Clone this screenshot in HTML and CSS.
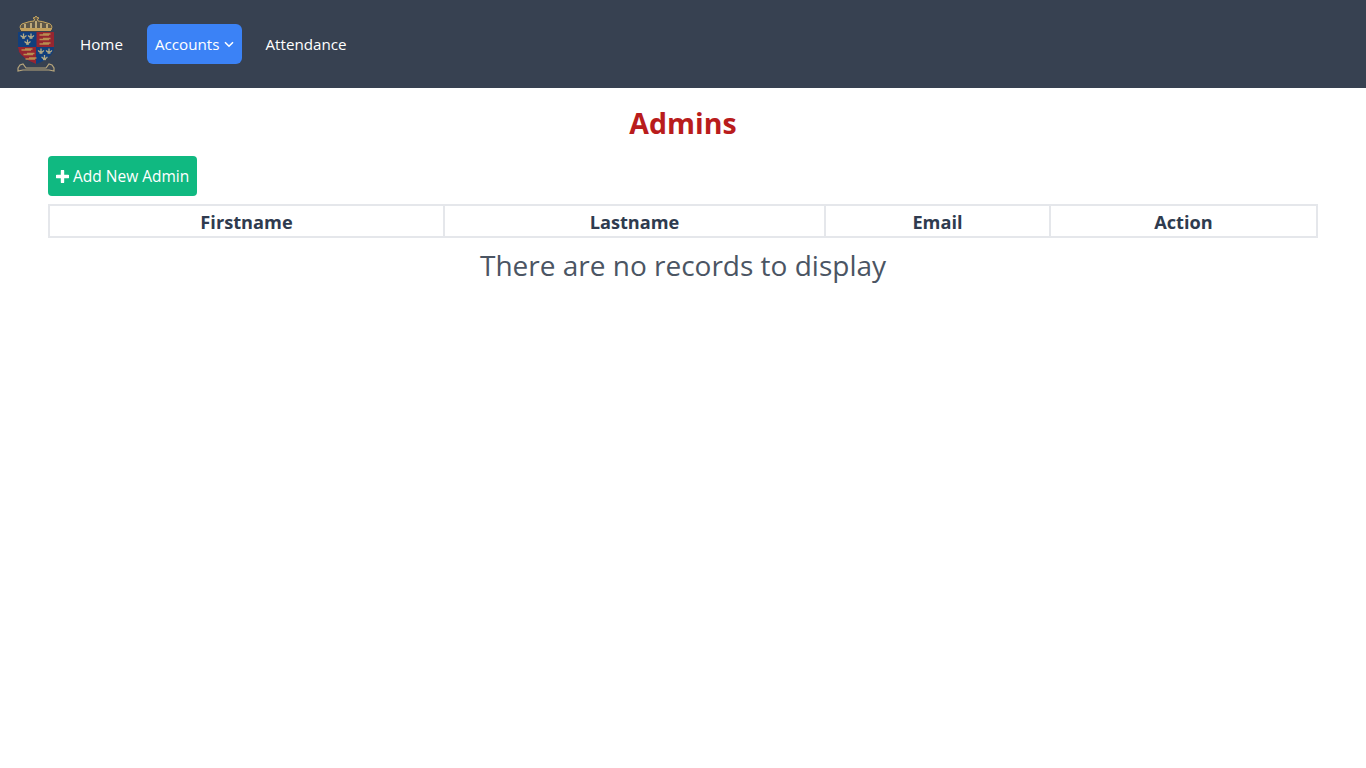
FILE: index.html
```html
<!DOCTYPE html>
<html lang="en">
<head>
    <meta charset="UTF-8">
    <meta name="viewport" content="width=device-width, initial-scale=1.0">
    <title>Admins</title>
    <link rel="stylesheet" href="styles.css">
</head>
<body>
    <nav class="navbar">
        <svg class="logo" width="40" height="58" viewBox="0 0 40 58" aria-hidden="true">
            <defs>
                <g id="fleur" fill="none" stroke="#b5ab85" stroke-width="1.300">
                    <path d="M0 -2.500 V2.500 M-2.600 -0.800 Q-2.600 1 0 1 Q2.600 1 2.600 -0.800"/>
                    <path d="M-1.500 2 H1.500"/>
                </g>
                <g id="lion" fill="none" stroke="#b98f50" stroke-width="1.300">
                    <path d="M-5.500 0 H4 M-2 -1 H5.500"/>
                </g>
            </defs>
            <!-- crown -->
            <path d="M5 15 Q2 9 9 8 Q14 6 18 6 L18.500 4 L17 3 L19 2.500 L20 1 L21 2.500 L23 3 L21.500 4 L22 6 Q26 6 31 8 Q38 9 35 15 Z" fill="#5d5648" stroke="#c9a860" stroke-width="1"/>
            <path d="M9 9 V14 M15 8 V14 M20 6 V14 M25 8 V14 M31 9 V14" stroke="#dcc48a" stroke-width="1.500"/>
            <rect x="5" y="13" width="30" height="3" fill="#c2a05c"/>
            <!-- shield -->
            <path d="M2 17 H38 V33 Q37 43 20 49 Q3 43 2 33 Z" fill="#123f7c"/>
            <path d="M20.500 17 H38 V32 H20.500 Z" fill="#962630"/>
            <path d="M2 32 H20 V49 Q7 44 3 37 Z" fill="#962630"/>
            <use href="#lion" x="29" y="20"/>
            <use href="#lion" x="29" y="24.500"/>
            <use href="#lion" x="29" y="29"/>
            <use href="#lion" x="11" y="35"/>
            <use href="#lion" x="13" y="39.500"/>
            <use href="#lion" x="15" y="44"/>
            <use href="#fleur" x="7.500" y="21"/>
            <use href="#fleur" x="15" y="21"/>
            <use href="#fleur" x="11.500" y="27"/>
            <use href="#fleur" x="25" y="36"/>
            <use href="#fleur" x="33" y="36"/>
            <use href="#fleur" x="28.500" y="42.500"/>
            <!-- motto -->
            <path d="M2 53 L4 50 L7 49 L10 53 H30 L33 49 L36 50 L38 53 L38 56 L33 55 L30 55 H10 L7 55 L2 56 Z" fill="#3f4653" stroke="#b7a67c" stroke-width="1.200"/>
        </svg>
        <a class="nav-link" href="#">Home</a>
        <a class="nav-link active" href="#">Accounts
            <svg class="caret" width="10" height="10" viewBox="0 0 10 10" aria-hidden="true"><path d="M1 3.200 L5 7.200 L9 3.200" fill="none" stroke="#fff" stroke-width="1.600"/></svg>
        </a>
        <a class="nav-link" href="#">Attendance</a>
    </nav>

    <main class="content">
        <h1 class="title">Admins</h1>
        <button class="add-btn">
            <svg width="13" height="13" viewBox="0 0 13 13" aria-hidden="true"><path d="M6.500 1 V12 M1 6.500 H12" stroke="#fff" stroke-width="3.400" stroke-linecap="round"/></svg>
            Add New Admin
        </button>
        <table class="records">
            <colgroup>
                <col class="col-first">
                <col class="col-last">
                <col class="col-email">
                <col class="col-action">
            </colgroup>
            <thead>
                <tr>
                    <th>Firstname</th>
                    <th>Lastname</th>
                    <th>Email</th>
                    <th>Action</th>
                </tr>
            </thead>
        </table>
        <p class="empty">There are no records to display</p>
    </main>
</body>
</html>
```

FILE: styles.css
```css
body {
    margin: 0;
    font-family: "Open Sans", "Noto Sans", sans-serif;
    background-color: #fff;
    color: #4b5563;
}
.navbar {
    display: flex;
    align-items: center;
    gap: 8px;
    height: 88px;
    padding: 0 16px;
    box-sizing: border-box;
    background-color: #374151;
}
.logo {
    margin-right: 8px;
}
.nav-link {
    display: flex;
    align-items: center;
    gap: 4px;
    height: 40px;
    padding: 0 8px;
    margin-right: 8px;
    border-radius: 6px;
    color: #fff;
    font-size: 15.200px;
    text-decoration: none;
}
.nav-link.active {
    background-color: #3b82f6;
}
.content {
    padding: 0 48px;
}
.title {
    margin: 0;
    padding-top: 15px;
    height: 68px;
    box-sizing: border-box;
    text-align: center;
    color: #b91c1c;
    font-size: 28.500px;
    line-height: 40px;
    font-weight: 700;
}
.add-btn {
    display: flex;
    align-items: center;
    gap: 4px;
    height: 40px;
    padding: 0 8px;
    border: none;
    border-radius: 4px;
    background-color: #10b981;
    color: #fff;
    font-family: inherit;
    font-size: 15.500px;
}
.records {
    width: 100%;
    margin-top: 8px;
    border-collapse: collapse;
    table-layout: fixed;
}
.records th {
    padding: 1px 0 0;
    height: 29px;
    line-height: 28px;
    border: 2px solid #e5e7eb;
    color: #2f3b4f;
    font-size: 18.200px;
    font-weight: 700;
}
.col-first { width: 395px; }
.col-last { width: 381px; }
.col-email { width: 225px; }
.empty {
    margin: 7px 0 0;
    text-align: center;
    font-size: 28px;
    line-height: 40px;
    font-weight: 400;
}
```
